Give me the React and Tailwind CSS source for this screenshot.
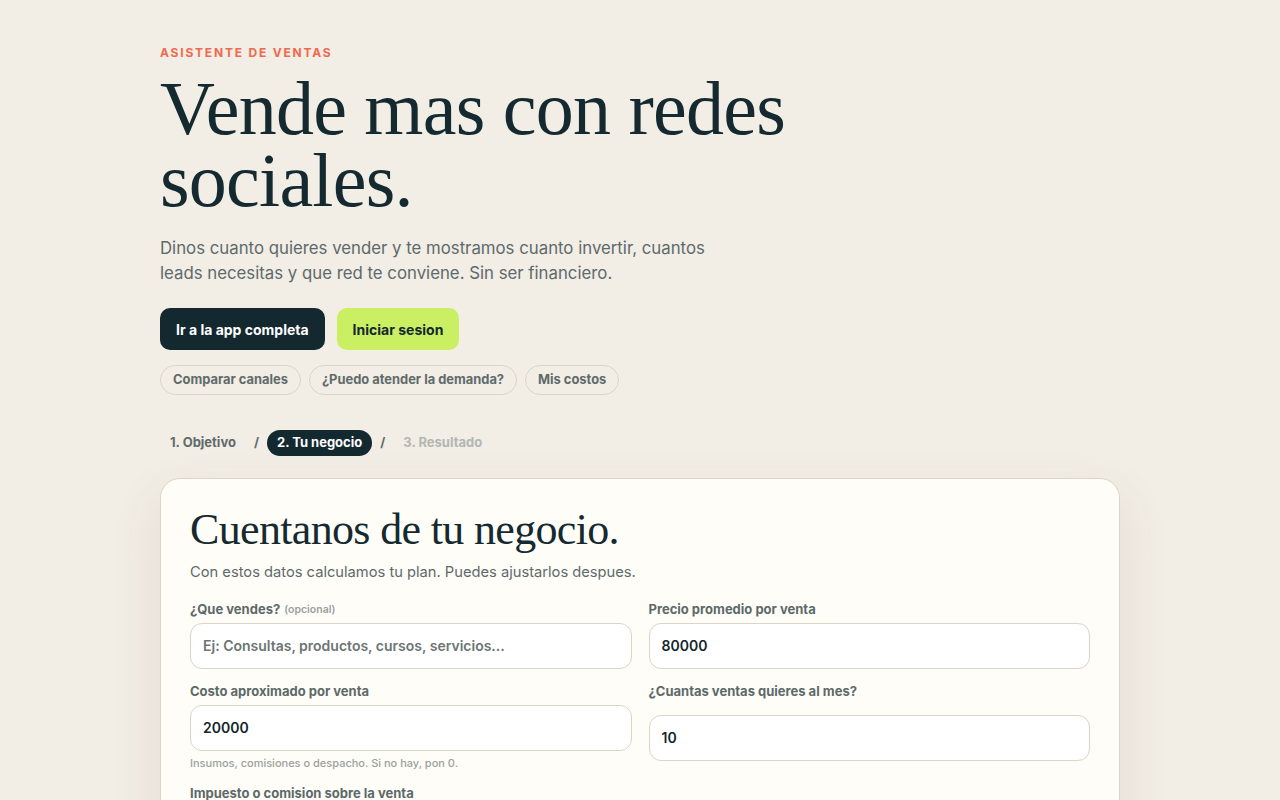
import React from 'react';

const serif = { fontFamily: '"Liberation Serif", "DejaVu Serif", serif' };

const Field = ({ label, value, placeholder, optional, help, className = '' }) => (
    <div className={`flex flex-col ${className}`}>
        <label className="h-5 flex items-center text-[13px] font-bold text-[#5c6a6a]">
            {label}
            {optional && <span className="ml-1 text-[10.5px] font-semibold text-[#9aa19f]">(opcional)</span>}
        </label>
        <div className="mt-[3px] h-[46px] rounded-xl border border-[#dcd4c6] bg-white px-3 flex items-center">
            {value ? (
                <span className="text-[14px] font-semibold text-[#13262c]">{value}</span>
            ) : (
                <span className="text-[14px] font-semibold text-[#6b7574]">{placeholder}</span>
            )}
        </div>
        {help && <p className="mt-[4px] text-[11px] font-medium text-[#9aa19f]">{help}</p>}
    </div>
);

export default function App() {
    return (
        <div className="min-h-screen bg-[#f2ede5] text-[#13282f]" style={{ fontFamily: 'Inter, "Noto Sans", sans-serif' }}>
            <div className="max-w-[960px] mx-auto pt-[44px] pb-16">
                {/* Hero */}
                <p className="text-[12px] font-bold tracking-[0.15em] text-[#ee6a4f] uppercase">Asistente de ventas</p>
                <h1 className="mt-[10px] text-[76px] leading-[72px] tracking-[-0.01em] text-[#152a30]" style={serif}>
                    Vende mas con redes<br />sociales.
                </h1>
                <p className="mt-[20px] text-[16.8px] leading-[25px] text-[#5d6a6c] max-w-[560px]">
                    Dinos cuanto quieres vender y te mostramos cuanto invertir, cuantos leads necesitas y que red te conviene. Sin ser financiero.
                </p>

                <div className="mt-[22px] flex gap-3">
                    <button className="h-[42px] px-4 rounded-[10px] bg-[#13282f] text-white text-[14px] font-bold">
                        Ir a la app completa
                    </button>
                    <button className="h-[42px] px-4 rounded-[10px] bg-[#cbef62] text-[#13282f] text-[14px] font-bold">
                        Iniciar sesion
                    </button>
                </div>

                <div className="mt-[15px] flex gap-2">
                    {['Comparar canales', '¿Puedo atender la demanda?', 'Mis costos'].map((t) => (
                        <span key={t} className="h-[30px] px-3 rounded-full border border-[#dcd4c6] flex items-center text-[12.9px] font-bold text-[#5f6b6b]">
                            {t}
                        </span>
                    ))}
                </div>

                {/* Steps */}
                <div className="mt-[34px] flex items-center text-[13px] font-bold">
                    <span className="px-[10px] py-[4px] text-[#5f6b6b]">1. Objetivo</span>
                    <span className="mx-2 text-[#5f6b6b]">/</span>
                    <span className="px-[10px] h-[26px] flex items-center rounded-full bg-[#13282f] text-white">2. Tu negocio</span>
                    <span className="mx-2 text-[#5f6b6b]">/</span>
                    <span className="px-[10px] py-[4px] text-[#b3b7b3]">3. Resultado</span>
                </div>

                {/* Card */}
                <div className="mt-[21px] rounded-[20px] border border-[#ddd5c7] bg-[#fffdf7] px-[29px] pt-[26px] pb-10 shadow-[0_20px_50px_rgba(120,100,70,0.12)]">
                    <h2 className="text-[44px] leading-[50px] tracking-[-0.015em] text-[#152a30]" style={serif}>
                        Cuentanos de tu negocio.
                    </h2>
                    <p className="mt-[6px] text-[14.7px] text-[#5d6a6c]">Con estos datos calculamos tu plan. Puedes ajustarlos despues.</p>

                    <div className="mt-[17px] grid grid-cols-2 gap-x-[17px] gap-y-[13px]">
                        <Field label="¿Que vendes?" optional placeholder="Ej: Consultas, productos, cursos, servicios..." />
                        <Field label="Precio promedio por venta" value="80000" />
                        <Field label="Costo aproximado por venta" value="20000" help="Insumos, comisiones o despacho. Si no hay, pon 0." />
                        <div className="flex flex-col">
                            <label className="h-5 flex items-center text-[13px] font-bold text-[#5c6a6a]">¿Cuantas ventas quieres al mes?</label>
                            <div className="mt-[13px] h-[46px] rounded-xl border border-[#dcd4c6] bg-white px-3 flex items-center">
                                <span className="text-[14px] font-semibold text-[#13262c]">10</span>
                            </div>
                        </div>
                        <Field label="Impuesto o comision sobre la venta" value="0" />
                    </div>
                </div>
            </div>
        </div>
    );
}
